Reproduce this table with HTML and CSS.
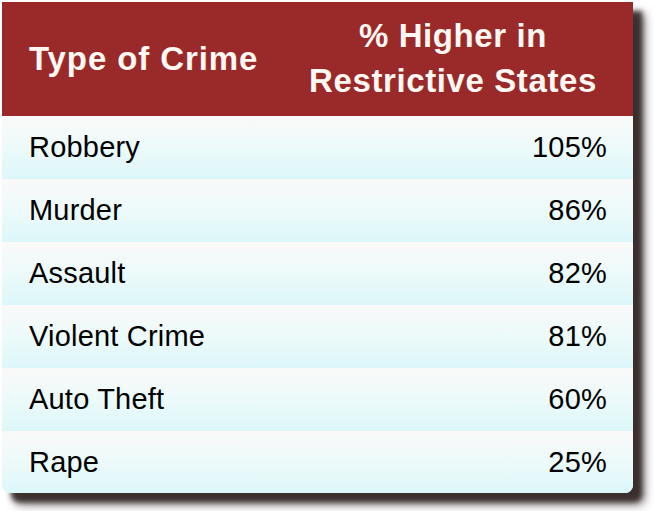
FILE: index.html
```html
<!DOCTYPE html>
<html>
<head>
<meta charset="utf-8">
<link rel="stylesheet" href="styles.css">
</head>
<body>
<div class="table">
  <div class="head">
    <div class="hcell hleft">Type of Crime</div>
    <div class="hcell hright">% Higher in<br>Restrictive States</div>
  </div>
  <div class="row"><div class="name">Robbery</div><div class="val">105%</div></div>
  <div class="row"><div class="name">Murder</div><div class="val">86%</div></div>
  <div class="row"><div class="name">Assault</div><div class="val">82%</div></div>
  <div class="row"><div class="name">Violent Crime</div><div class="val">81%</div></div>
  <div class="row"><div class="name">Auto Theft</div><div class="val">60%</div></div>
  <div class="row last"><div class="name">Rape</div><div class="val">25%</div></div>
</div>
</body>
</html>
```
FILE: styles.css
```css
html {
  margin: 0;
  padding: 0;
  background: #ffffff;
  overflow: hidden;
}
body {
  margin: 0;
  padding: 2px 0 0 2px;
  min-height: 509px;
  font-family: "Liberation Sans", Arial, sans-serif;
}
.table {
  width: 631px;
  border-radius: 0 0 8px 8px;
  box-shadow: 9px 9px 5px 0 rgba(45, 32, 32, 0.85), 12px 12px 10px 0 rgba(60, 45, 45, 0.6);
  overflow: hidden;
  background: #eefafa;
}
.head {
  display: grid;
  grid-template-columns: 275px 1fr;
  height: 114px;
  background: #9a2a2a;
  color: #fff8f3;
  font-weight: bold;
  font-size: 33px;
  letter-spacing: 0.6px;
}
.hcell {
  display: flex;
  align-items: center;
}
.hleft {
  padding-left: 27px;
  letter-spacing: 0.9px;
}
.hright {
  justify-content: center;
  text-align: center;
  line-height: 45px;
  padding-right: 4px;
  padding-bottom: 2px;
}
.row {
  display: flex;
  justify-content: space-between;
  align-items: center;
  height: 63px;
  padding: 0 26px 0 27px;
  background: linear-gradient(to bottom, #faf9f9 0%, #eefafa 45%, #dcf7f9 100%);
  font-size: 29px;
  letter-spacing: 0.2px;
  color: #000;
}
.row.last {
  height: 62px;
}
```
